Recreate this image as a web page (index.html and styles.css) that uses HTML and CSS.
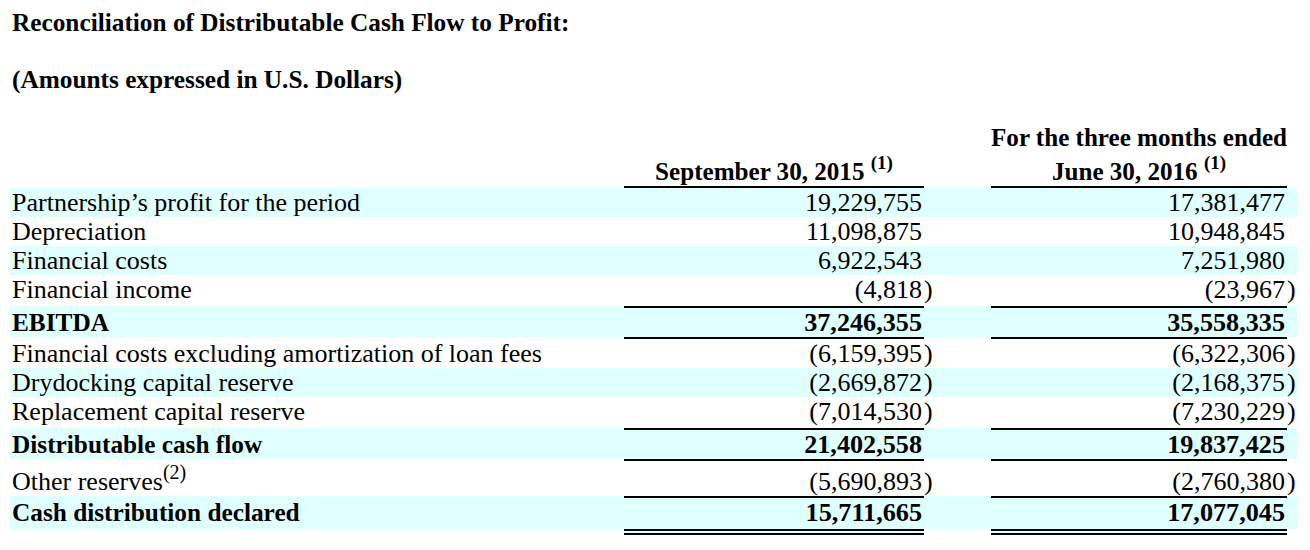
FILE: index.html
```html
<!DOCTYPE html>
<html lang="en">
<head>
<meta charset="utf-8">
<title>Reconciliation of Distributable Cash Flow to Profit</title>
<link rel="stylesheet" href="styles.css">
</head>
<body>
<div class="page">
  <p class="heading">Reconciliation of Distributable Cash Flow to Profit:</p>
  <p class="heading sub">(Amounts expressed in U.S. Dollars)</p>
  <table class="recon">
    <colgroup>
      <col class="c-label">
      <col class="c-num1">
      <col class="c-paren">
      <col class="c-gap">
      <col class="c-num2">
      <col class="c-paren">
    </colgroup>
    <thead>
      <tr class="hdr">
        <th class="lbl"></th>
        <th class="num">
          <div class="hline">September 30, 2015 <sup class="fn">(1)</sup></div>
        </th>
        <th class="par"></th>
        <th class="gap"></th>
        <th class="num">
          <div class="hline top">For the three months ended</div>
          <div class="hline">June 30, 2016 <sup class="fn">(1)</sup></div>
        </th>
        <th class="par"></th>
      </tr>
    </thead>
    <tbody>
      <tr class="shade">
        <td class="lbl">Partnership’s profit for the period</td>
        <td class="num">19,229,755</td><td class="par"></td><td class="gap"></td>
        <td class="num">17,381,477</td><td class="par"></td>
      </tr>
      <tr>
        <td class="lbl">Depreciation</td>
        <td class="num">11,098,875</td><td class="par"></td><td class="gap"></td>
        <td class="num">10,948,845</td><td class="par"></td>
      </tr>
      <tr class="shade">
        <td class="lbl">Financial costs</td>
        <td class="num">6,922,543</td><td class="par"></td><td class="gap"></td>
        <td class="num">7,251,980</td><td class="par"></td>
      </tr>
      <tr class="pre">
        <td class="lbl">Financial income</td>
        <td class="num">(4,818</td><td class="par">)</td><td class="gap"></td>
        <td class="num">(23,967</td><td class="par">)</td>
      </tr>
      <tr class="shade total">
        <td class="lbl">EBITDA</td>
        <td class="num">37,246,355</td><td class="par"></td><td class="gap"></td>
        <td class="num">35,558,335</td><td class="par"></td>
      </tr>
      <tr class="after">
        <td class="lbl">Financial costs excluding amortization of loan fees</td>
        <td class="num">(6,159,395</td><td class="par">)</td><td class="gap"></td>
        <td class="num">(6,322,306</td><td class="par">)</td>
      </tr>
      <tr class="shade">
        <td class="lbl">Drydocking capital reserve</td>
        <td class="num">(2,669,872</td><td class="par">)</td><td class="gap"></td>
        <td class="num">(2,168,375</td><td class="par">)</td>
      </tr>
      <tr class="pre">
        <td class="lbl">Replacement capital reserve</td>
        <td class="num">(7,014,530</td><td class="par">)</td><td class="gap"></td>
        <td class="num">(7,230,229</td><td class="par">)</td>
      </tr>
      <tr class="shade total">
        <td class="lbl">Distributable cash flow</td>
        <td class="num">21,402,558</td><td class="par"></td><td class="gap"></td>
        <td class="num">19,837,425</td><td class="par"></td>
      </tr>
      <tr class="after tall">
        <td class="lbl">Other reserves<sup class="fn2">(2)</sup></td>
        <td class="num">(5,690,893</td><td class="par">)</td><td class="gap"></td>
        <td class="num">(2,760,380</td><td class="par">)</td>
      </tr>
      <tr class="shade total final">
        <td class="lbl">Cash distribution declared</td>
        <td class="num">15,711,665</td><td class="par"></td><td class="gap"></td>
        <td class="num">17,077,045</td><td class="par"></td>
      </tr>
    </tbody>
  </table>
</div>
</body>
</html>
```

FILE: styles.css
```css
html, body {
  margin: 0;
  padding: 0;
  background: #ffffff;
}

.page {
  padding: 8px 0 0 10px;
  font-family: "Liberation Serif", "Times New Roman", serif;
  font-size: 25.3px;
  color: #000000;
}

.heading {
  margin: 0;
  padding-left: 2px;
  font-weight: bold;
  line-height: 29px;
}

.heading.sub {
  margin-top: 28px;
}

.recon {
  margin-top: 29px;
  width: 1287px;
  table-layout: fixed;
  border-collapse: separate;
  border-spacing: 0;
  font-size: 26px;
  line-height: 29px;
}

.c-label { width: 614px; }
.c-num1 { width: 300px; }
.c-paren { width: 10px; }
.c-gap { width: 57px; }
.c-num2 { width: 296px; }

.recon th,
.recon td {
  padding: 0;
  vertical-align: top;
  white-space: nowrap;
  border-top: 0 solid transparent;
}

.recon td.lbl {
  padding-left: 2px;
  text-align: left;
}

.recon td.num {
  text-align: right;
  padding-right: 2px;
}

.recon td.par {
  text-align: left;
  overflow: visible;
}

/* header */
.hdr th {
  font-size: 25.1px;
  font-weight: bold;
  text-align: center;
  vertical-align: bottom;
  border-bottom: 2px solid transparent;
}

.hdr th.num {
  border-bottom-color: #000000;
}

.hline {
  line-height: 29px;
}

.hline.top {
  margin-bottom: 5px;
}

.fn {
  font-size: 19px;
  line-height: 0;
  vertical-align: 11px;
}

.fn2 {
  font-size: 20px;
  font-weight: normal;
  line-height: 0;
  vertical-align: 11px;
}

/* rows */
.shade td {
  background: #e0ffff;
}

.pre td {
  padding-bottom: 2px;
}

.total td {
  font-size: 25.3px;
  font-weight: bold;
  border-top: 2px solid transparent;
}

.total td.num {
  font-size: 26.2px;
  border-top-color: #000000;
}

.after td {
  border-top: 2px solid transparent;
}

.after td.num {
  border-top-color: #000000;
}

.tall td {
  padding-top: 6px;
}

.final td {
  padding-bottom: 2px;
  border-bottom: 6px solid #ffffff;
}

.final td.num {
  border-bottom: 6px double #000000;
}
```
